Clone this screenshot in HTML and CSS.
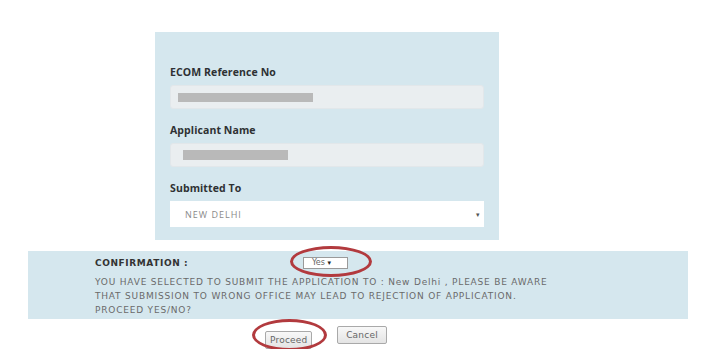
FILE: index.html
```html
<!DOCTYPE html>
<html lang="en">
<head>
    <meta charset="UTF-8">
    <title>Confirm Submission</title>
    <link rel="stylesheet" href="styles.css">
</head>
<body>

    <div class="card">
        <div class="label first">ECOM Reference No</div>
        <div class="field">
            <span class="redact" style="width: 135px;"></span>
        </div>

        <div class="label">Applicant Name</div>
        <div class="field">
            <span class="redact short" style="width: 105px;"></span>
        </div>

        <div class="label">Submitted To</div>
        <div class="select-box">
            <span>NEW DELHI</span>
            <span class="caret">&#9662;</span>
        </div>
    </div>

    <div class="confirm">
        <div class="confirm-row">
            <div class="confirm-title">CONFIRMATION :</div>
            <div class="yes-wrap">
                <div class="yes-select">Yes <span class="caret-sm">&#9662;</span></div>
                <div class="mark mark-yes"></div>
            </div>
        </div>
        <p class="confirm-text">
            YOU HAVE SELECTED TO SUBMIT THE APPLICATION TO : New Delhi , PLEASE BE AWARE<br>
            THAT SUBMISSION TO WRONG OFFICE MAY LEAD TO REJECTION OF APPLICATION.<br>
            PROCEED YES/NO?
        </p>
    </div>

    <div class="actions">
        <div class="btn-wrap">
            <button class="btn">Proceed</button>
            <div class="mark mark-proceed"></div>
        </div>
        <button class="btn cancel">Cancel</button>
    </div>

</body>
</html>
```

FILE: styles.css
```css
body {
    margin: 0;
    background: #fff;
    font-family: 'Open Sans', 'Liberation Sans', sans-serif;
    color: #333;
}

.card {
    width: 314px;
    margin: 32px 0 0 155px;
    padding: 34px 15px 13px;
    background: #d5e7ee;
}

.label {
    font-size: 10.5px;
    font-weight: 700;
    line-height: 12px;
    letter-spacing: 0.1px;
    color: #2e3133;
    margin-top: 15px;
}

.label.first {
    margin-top: 0;
}

.field {
    height: 24px;
    margin-top: 7px;
    background: #eaeef0;
    border: 1px solid #e2e7ea;
    border-radius: 3px;
    box-sizing: border-box;
    display: flex;
    align-items: center;
    padding-left: 7px;
}

.redact {
    display: block;
    height: 9px;
    background: #b9b9b9;
}

.redact.short {
    margin-left: 5px;
    height: 10px;
}

.select-box {
    height: 26px;
    margin-top: 7px;
    background: #fff;
    display: flex;
    align-items: center;
    justify-content: space-between;
    padding: 0 3px 0 15px;
    font-size: 9px;
    letter-spacing: 1px;
    color: #8a8a8a;
}

.caret {
    font-size: 7px;
    color: #555;
}

.confirm {
    width: 593px;
    margin: 11px 0 0 28px;
    padding: 6px 0 2px 67px;
    background: #d5e7ee;
    font-family: 'DejaVu Sans', Verdana, sans-serif;
}

.confirm-row {
    display: flex;
    align-items: center;
    height: 12px;
}

.confirm-title {
    width: 208px;
    font-size: 9px;
    font-weight: 700;
    letter-spacing: 0.6px;
    color: #333;
}

.yes-wrap {
    position: relative;
}

.yes-select {
    width: 45px;
    height: 12px;
    box-sizing: border-box;
    background: #fff;
    border: 1px solid #9a9a9a;
    font-size: 8px;
    line-height: 10px;
    color: #666;
    padding-left: 8px;
}

.caret-sm {
    font-size: 7px;
    color: #222;
}

.confirm-text {
    margin: 6px 0 0;
    font-size: 9px;
    line-height: 14px;
    letter-spacing: 0.8px;
    color: #6a6a6a;
}

.actions {
    display: flex;
    gap: 25px;
    margin: 7px 0 0 265px;
}

.btn-wrap {
    position: relative;
}

.btn {
    height: 18px;
    padding: 0 4px;
    font-family: 'DejaVu Sans', Verdana, sans-serif;
    font-size: 9px;
    letter-spacing: 0.2px;
    color: #666;
    background: linear-gradient(#f8f8f8, #e4e4e4);
    border: 1px solid #a9a9a9;
    border-radius: 2px;
}

.btn-wrap .btn {
    width: 47px;
}

.btn.cancel {
    width: 50px;
}

.mark {
    position: absolute;
    border: 3px solid #b23a3e;
    border-radius: 50%;
    box-sizing: border-box;
}

.mark-yes {
    left: -13px;
    top: -11px;
    width: 82px;
    height: 31px;
}

.mark-proceed {
    left: -13px;
    top: -7px;
    width: 75px;
    height: 32px;
}
```
